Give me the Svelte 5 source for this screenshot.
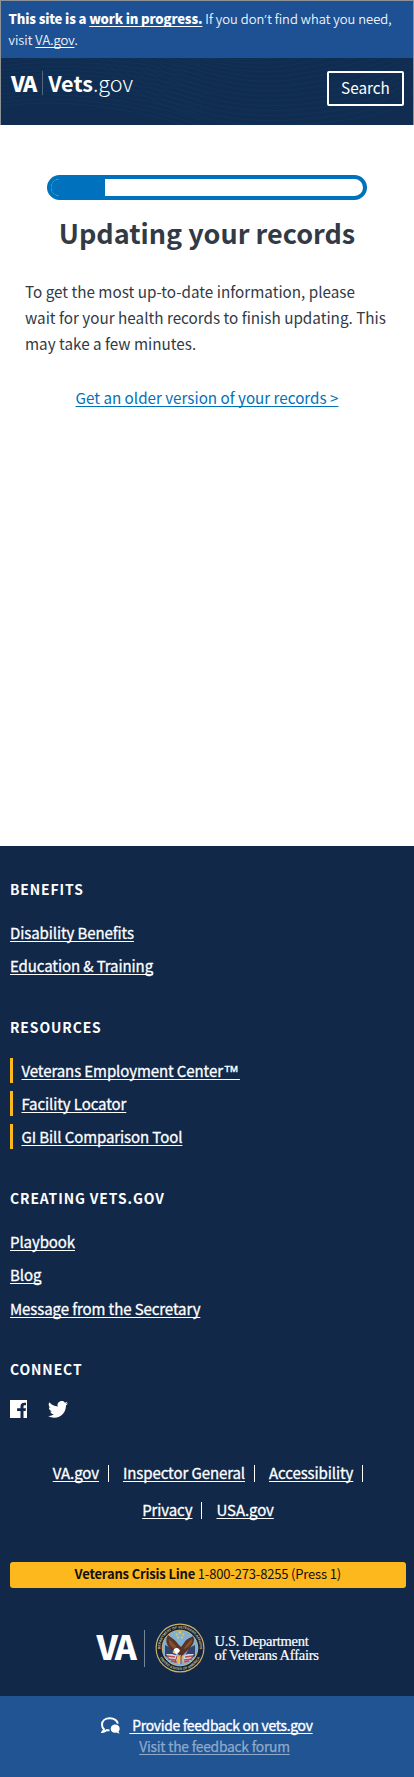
<script>
  const resources = ['Veterans Employment Center™', 'Facility Locator', 'GI Bill Comparison Tool'];
  const creating = ['Playbook', 'Blog', 'Message from the Secretary'];
  const benefits = ['Disability Benefits', 'Education & Training'];
  const waves = Array.from({ length: 15 }, (_, i) => i);
  const progress = 17.3;
</script>

<div class="page">
  <div class="top">
    <div class="banner">
      <b>This site is a <a href="#progress">work in progress.</a></b> <span class="rest">If you don<span class="apos">’</span>t find what you need,</span><br />
      <span class="rest">visit <a href="#va">VA.gov</a>.</span>
    </div>
    <header>
      <svg class="waves" viewBox="0 0 412 67" preserveAspectRatio="none" aria-hidden="true">
        {#each waves as i}
          <path d="M{90 + i * 8} 0 Q{170 + i * 7} {74 - i * 5} 290 {67 - i * 5} T412 {32 - i * 4}" />
          <path d="M0 {i * 4 - 8} Q90 {i * 4 - 20} 200 {i * 5 + 2}" />
        {/each}
      </svg>
      <div class="logo"><b class="va">VA</b><i></i><span class="vets"><b>Vets</b>.gov</span></div>
      <button>Search</button>
    </header>
  </div>

  <main>
    <div class="bar"><div class="fill" style="width: {progress}%"></div></div>
    <h1>Updating your records</h1>
    <p>To get the most up-to-date information, please<br />wait for your health records to finish updating. This<br />may take a few minutes.</p>
    <a class="older" href="#older">Get an older version of your records &gt;</a>
  </main>

  <footer>
    <section>
      <h2>BENEFITS</h2>
      <ul>{#each benefits as l}<li><a href="#l">{l}</a></li>{/each}</ul>
    </section>
    <section>
      <h2>RESOURCES</h2>
      <ul class="marked">{#each resources as l}<li><a href="#l">{l.replace('™', '')}{#if l.endsWith('™')}<span class="tm">™</span>{/if}</a></li>{/each}</ul>
    </section>
    <section>
      <h2>CREATING VETS.GOV</h2>
      <ul>{#each creating as l}<li><a href="#l">{l}</a></li>{/each}</ul>
    </section>
    <section class="connect">
      <h2>CONNECT</h2>
      <div class="social">
        <svg width="17" height="18" viewBox="0 0 17 18"><path fill="#fff" d="M0 0h17v18h-3.500v-7h2.100l.4-2.700h-2.500V6.600c0-.9.4-1.300 1.300-1.300H16V2.800c-.4-.1-1-.1-1.800-.1-2.400 0-3.700 1.300-3.700 3.600v2H7.100V11h3.400v7H0z" /></svg>
        <svg width="20" height="17" viewBox="0 0 24 20"><path fill="#fff" d="M24 2.600c-.9.4-1.800.7-2.800.8 1-.6 1.800-1.600 2.200-2.700-1 .6-2 1-3.100 1.200A4.900 4.900 0 0 0 11.700 6.400C7.700 6.200 4.100 4.300 1.700 1.300A4.900 4.900 0 0 0 3.200 7.900c-.8 0-1.600-.2-2.200-.6 0 2.400 1.700 4.400 3.900 4.900-.7.2-1.500.2-2.200.1.600 2 2.400 3.400 4.600 3.400A9.900 9.900 0 0 1 0 17.700 14 14 0 0 0 7.500 19.900c9.100 0 14.300-7.700 14-14.600 1-.7 1.800-1.600 2.500-2.700z" /></svg>
      </div>
    </section>
    <nav>
      <div><a href="#a">VA.gov</a><i></i><a href="#b">Inspector General</a><i></i><a href="#c">Accessibility</a><i></i></div>
      <div><a href="#d">Privacy</a><i></i><a href="#e">USA.gov</a></div>
    </nav>
    <div class="crisis"><b>Veterans Crisis Line</b> 1-800-273-8255 (Press 1)</div>
    <div class="dept">
      <b>VA</b><i></i>
      <svg width="50" height="50" viewBox="-25 -25 50 50" aria-hidden="true">
        <circle r="24.500" fill="#c9b269" />
        <circle r="23.300" fill="#17223f" />
        <circle r="17.800" fill="#80b1d3" stroke="#cbb970" stroke-width="1" />
        <path id="ringTop" fill="none" d="M-19.300 4A19.700 19.700 0 1 1 19.300 4" />
        <path id="ringBottom" fill="none" d="M-21 7A22.200 22.200 0 0 0 21 7" />
        <text><textPath href="#ringTop" startOffset="50%" text-anchor="middle">DEPARTMENT OF VETERANS AFFAIRS</textPath></text>
        <text><textPath href="#ringBottom" startOffset="50%" text-anchor="middle">UNITED STATES OF AMERICA</textPath></text>
        <g fill="#e8c759"><circle cx="0" cy="-15.500" r="1.200" /><circle cx="-3.300" cy="-13.500" r="1.100" /><circle cx="3.300" cy="-13.500" r="1.100" /><circle cx="-2" cy="-10.500" r="1.100" /><circle cx="2" cy="-10.500" r="1.100" /></g>
        <path fill="#33436f" d="M-15-3-9 0-4 6-7 13-15 8zM15-3 9 0 6 6 8 13 15 8z" />
        <path fill="#d7d6dc" d="M-14 6-8 6-2 8-3 15-9 13zM14 6 8 6 3 8 4 15 9 13z" />
        <path stroke="#b54b54" stroke-width="1.300" fill="none" d="M-13 8-5 9M-12 11-4 12M-9 13-3 14M13 8 5 9M12 11 4 12M9 13 4 14" />
        <path fill="#593426" d="M-12-13C-9-10-5-9-2-4L1-1 4-5C6-9 10-10 13-12 16-7 12-2 8 2L4 6 1 9-4 4C-10 2-17-5-12-13z" />
        <path fill="#82502f" d="M-11-9C-8-6-5-4-3 0L-3 2C-8 0-12-4-11-9zM12-9C8-6 6-3 4 0L5 1C9-2 13-4 12-9z" />
        <path fill="#fff" d="M-6 1C-3-1-1 0 0 3L-3 6-7 5z" />
        <path fill="#e3bd57" d="M-8 4-5 3-5 5zM-2 8 1 7 0 16-2 16zM2 7 4 9 3 16z" />
        <path stroke="#a64042" fill="none" d="M-3 8-5 15M1 8 1 16" />
      </svg>
      <div class="name"><span>U.S. Department</span><br /><span>of Veterans Affairs</span></div>
    </div>
  </footer>

  <div class="feedback">
    <div class="provide">
      <svg width="19" height="17" viewBox="0 0 19 17"><path fill="none" stroke="#fff" stroke-width="2" d="M8.500 13.200c-1 .2-2 .2-3 0-.9.800-2.200 1.500-4 1.700.7-.7 1.300-1.700 1.400-2.800C1.600 11 1 9.300 1 7.500 1 3.800 4.300 1.300 8.800 1.300s7.700 2.400 8 5.300" /><path fill="#fff" d="M9.700 11.700c0-2.400 1.900-4.200 4.500-4.200s4.500 1.800 4.500 4.200c0 1.100-.4 2-1.100 2.700.1.700.5 1.500 1.100 2-1.200 0-2.200-.4-2.900-.9-3.300.9-6.100-.8-6.100-3.800z" /></svg>
      <a href="#f">&nbsp;Provide feedback on vets.gov</a>
    </div>
    <a class="forum" href="#g">Visit the feedback forum</a>
  </div>
</div>

<style>
  .page {
    width: 414px;
    height: 1777px;
    display: flex;
    flex-direction: column;
    background: #fff;
    color: #323a45;
    font-family: "Noto Sans CJK SC", "Noto Sans", sans-serif;
    font-size: 15.250px;
    overflow: hidden;
  }
  .page * { box-sizing: border-box; }
  a {
    color: inherit;
    text-decoration: underline;
    text-decoration-thickness: 1px;
    text-decoration-skip-ink: none;
    text-underline-offset: 2px;
  }
  .top { height: 125px; border: 1px solid #8d9297; border-bottom: 0; color: #fff; }
  .banner { height: 57px; padding: 6.500px 7.500px 0; background: #1d5194; font-size: 13.100px; line-height: 21.700px; white-space: nowrap; }
  .banner b { font-weight: 900; letter-spacing: -.15px; }
  .rest { font-weight: 300; letter-spacing: .05px; -webkit-text-stroke: .15px #fff; }
  .apos { font-family: "Open Sans", sans-serif; line-height: 1; letter-spacing: .8px; }
  header { position: relative; height: 67px; padding: 12px 9px 0 10px; display: flex; justify-content: space-between; align-items: flex-start; background: #102d51; }
  .waves { position: absolute; inset: 0; width: 100%; height: 100%; fill: none; stroke: #153a61; stroke-width: .7; opacity: .65; }
  .logo, button { position: relative; }
  .logo { display: flex; align-items: center; height: 26px; font-size: 21.600px; line-height: 26px; }
  .va { font-weight: 900; letter-spacing: -1.500px; }
  .logo i { width: 1px; height: 24px; margin: 0 5.500px 0 6px; background: #526681; }
  .vets { font-weight: 300; }
  .vets b { font-weight: 700; }
  button { width: 77px; height: 35px; margin-top: 1px; padding: 0 0 3px; border: 2px solid #fff; border-radius: 2px; background: transparent; color: #fff; font: 15.300px/28px "Noto Sans CJK SC", sans-serif; }
  main { height: 721px; padding-top: 50px; display: flex; flex-direction: column; align-items: center; }
  .bar { width: 320px; height: 25px; border: 4px solid #0071bc; border-radius: 13px; overflow: hidden; }
  .fill { height: 100%; background: #0071bc; }
  h1 { margin: 15px 0 0; font-size: 27px; line-height: 36px; font-weight: 700; white-space: nowrap; }
  p { align-self: stretch; margin: 27px 0 0 25px; line-height: 26px; white-space: nowrap; }
  .older { margin-top: 28px; font-size: 15.200px; line-height: 26px; color: #0071bc; }
  footer { height: 850px; padding: 32px 8px 0 10px; background: #112849; color: #fff; }
  h2 { margin: 0; font-size: 13.900px; line-height: 22px; letter-spacing: .9px; font-weight: 700; }
  ul { list-style: none; margin: 20px 0 0; padding: 0; }
  li { height: 25px; margin-bottom: 8.200px; line-height: 25px; }
  li a, nav a { font-size: 15px; letter-spacing: -.09px; -webkit-text-stroke: .3px currentColor; }
  .tm { font-family: "Liberation Sans", sans-serif; font-size: 16px; line-height: 1; letter-spacing: 1px; }
  section { margin-bottom: 37.800px; }
  .marked li { border-left: 3px solid #fdb81e; padding-left: 8.500px; }
  .connect { margin-bottom: 0; }
  .social { display: flex; align-items: center; gap: 21px; margin-top: 20px; height: 18px; }
  nav { margin-top: 36px; line-height: 37px; text-align: center; }
  nav div { display: flex; justify-content: center; align-items: center; height: 37px; }
  nav div:last-child { height: 36px; }
  nav i { width: 1px; height: 17px; margin: 2px 14px 0 9px; background: #fff; }
  nav i:last-child { margin-right: 0; }
  .crisis { height: 26px; margin: 35px 0 0 -.5px; border-radius: 3px; background: #fdb81e; color: #101010; text-align: center; font-size: 13px; line-height: 23px; letter-spacing: -.17px; }
  .dept { display: flex; align-items: center; height: 50px; margin: 35px 0 0 86.500px; }
  .dept > b { height: 50px; font-size: 33.500px; line-height: 45px; font-weight: 900; letter-spacing: -2.500px; }
  .dept i { width: 1px; height: 37px; margin: 0 10px; background: #75869b; }
  .dept text { fill: #d8c57c; font-family: "Liberation Sans", sans-serif; font-size: 3.400px; font-weight: 700; }
  .name { margin-left: 9px; font-family: "Liberation Serif", serif; font-size: 14.500px; line-height: 14px; letter-spacing: -.25px; -webkit-text-stroke: .2px #fff; white-space: nowrap; }
  .feedback { height: 81px; padding-top: 18px; background: #205493; color: #fff; display: flex; flex-direction: column; align-items: center; font-size: 13.800px; line-height: 22px; letter-spacing: -.22px; }
  .provide { display: flex; align-items: center; gap: 9px; letter-spacing: -.25px; -webkit-text-stroke: .35px currentColor; }
  .forum { margin: -1px 0 0 15px; color: #90aac9; -webkit-text-stroke: .25px #90aac9; }
</style>
